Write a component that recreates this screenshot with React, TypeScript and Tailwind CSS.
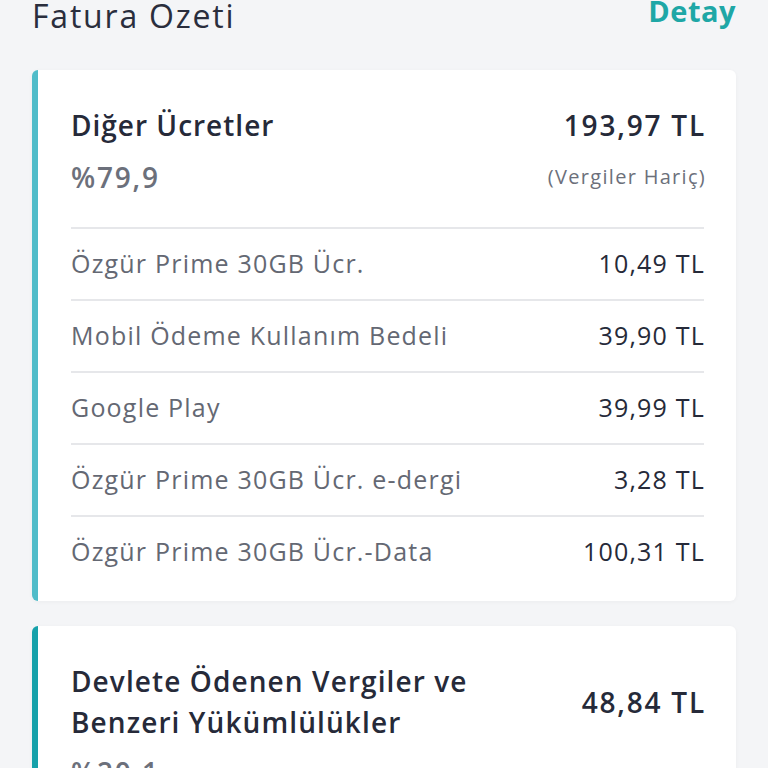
const items = [
  { label: 'Özgür Prime 30GB Ücr.', amount: '10,49 TL' },
  { label: 'Mobil Ödeme Kullanım Bedeli', amount: '39,90 TL' },
  { label: 'Google Play', amount: '39,99 TL' },
  { label: 'Özgür Prime 30GB Ücr. e-dergi', amount: '3,28 TL' },
  { label: 'Özgür Prime 30GB Ücr.-Data', amount: '100,31 TL' },
];

export default function App() {
  return (
    <div
      className="h-[768px] w-[768px] overflow-hidden bg-[#f4f5f7] px-8"
      style={{ fontFamily: '"Open Sans", Lato, sans-serif' }}
    >
      <div className="-mt-[8px] flex h-[48px] items-center justify-between">
        <h1 className="text-[32px] leading-none tracking-[1.8px] text-[#2a2e3d]">Fatura Ozeti</h1>
        <span className="mb-[12px] text-[29px] font-bold leading-none tracking-[0.5px] text-[#1ea7a6]">Detay</span>
      </div>

      <div className="mt-[30px] flex flex-col gap-[25px]">
        <section className="rounded-md border-l-[6px] border-[#50bcc9] bg-white pl-[33px] pr-8 shadow-[0_1px_4px_rgba(0,0,0,0.04)]">
          <div className="flex justify-between pt-[38px]">
            <div className="flex flex-col">
              <span className="text-[28px] font-semibold leading-[34px] tracking-[1px] text-[#262a39]">Diğer Ücretler</span>
              <span className="mt-[18px] text-[28px] font-semibold leading-[34px] tracking-[1.8px] text-[#6c707b]">%79,9</span>
            </div>
            <div className="-mr-[2px] flex flex-col items-end">
              <span className="text-[28px] font-semibold leading-[34px] tracking-[1.8px] text-[#262a39]">193,97 TL</span>
              <span className="mt-[20px] text-[20px] leading-[30px] tracking-[1.3px] text-[#6c707b]">(Vergiler Hariç)</span>
            </div>
          </div>
          <ul className="mt-[33px] pb-[14px]">
            {items.map((item) => (
              <li
                key={item.label}
                className="flex h-[72px] items-center justify-between border-t-2 border-[#e6e7ea] text-[25px] tracking-[1.2px]"
              >
                <span className="text-[#646873]">{item.label}</span>
                <span className="-mr-[1px] text-[#262a39]">{item.amount}</span>
              </li>
            ))}
          </ul>
        </section>

        <section className="rounded-md border-l-[6px] border-[#16a1aa] bg-white pl-[33px] pr-8 pb-10 shadow-[0_1px_4px_rgba(0,0,0,0.04)]">
          <div className="flex items-center justify-between pt-[35px]">
            <span className="w-[440px] text-[28px] font-semibold leading-[41px] tracking-[1.1px] text-[#262a39]">
              Devlete Ödenen Vergiler ve Benzeri Yükümlülükler
            </span>
            <span className="-mr-[2px] text-[28px] font-semibold leading-[34px] tracking-[1.8px] text-[#262a39]">48,84 TL</span>
          </div>
          <span className="mt-[12px] block text-[28px] font-semibold leading-[34px] tracking-[1.8px] text-[#6c707b]">%20,1</span>
        </section>
      </div>
    </div>
  );
}
